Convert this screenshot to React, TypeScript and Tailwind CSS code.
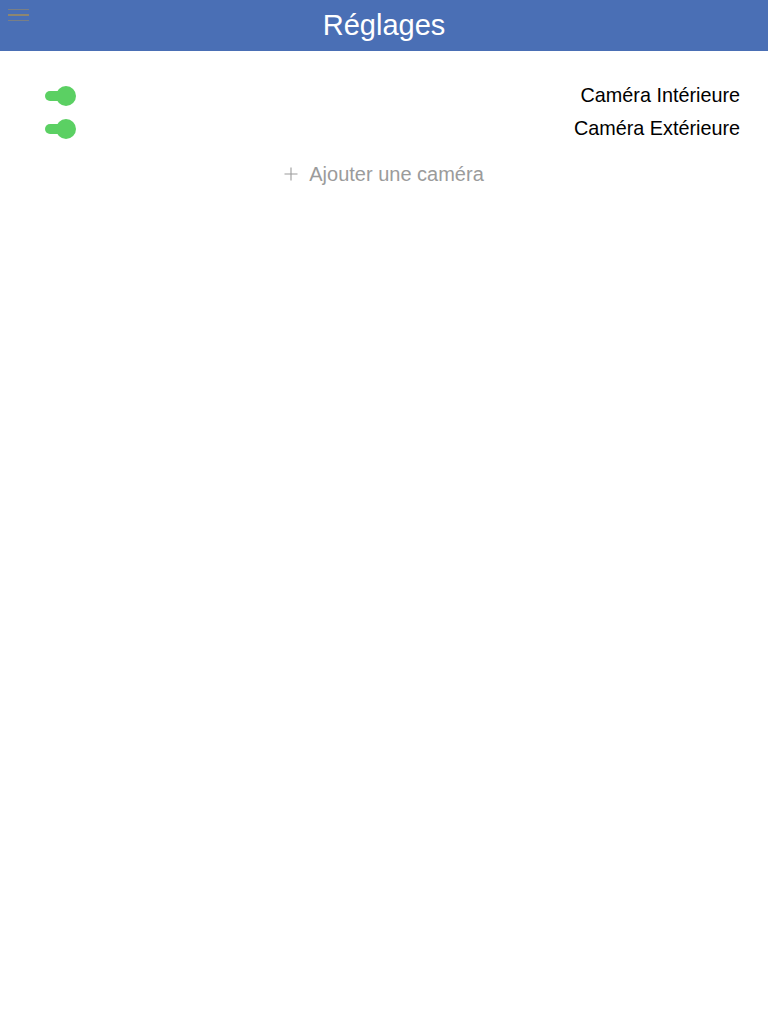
import React from "react";

function Toggle() {
  return (
    <div className="relative w-[31px] h-[20px] shrink-0">
      <div className="absolute left-0 top-[5px] w-[20px] h-[10px] rounded-full bg-[#5bd063]" />
      <div className="absolute right-0 top-0 w-[20px] h-[20px] rounded-full bg-[#5bd063]" />
    </div>
  );
}

export default function App() {
  const cams = ["Caméra Intérieure", "Caméra Extérieure"];
  return (
    <div
      className="w-[768px] h-[1024px] bg-white"
      style={{ fontFamily: '"Liberation Sans", Arial, sans-serif' }}
    >
      <header className="relative h-[51px] bg-[#4a6fb5] flex items-center justify-center">
        <div className="absolute left-[8px] top-[9px] w-[21px] flex flex-col gap-[4px]">
          <div className="h-px bg-[#8d8670] opacity-70" />
          <div className="h-[1.5px] bg-[#8d8670]" />
          <div className="h-px bg-[#8d8670] opacity-70" />
        </div>
        <h1 className="text-white text-[29px] leading-none">Réglages</h1>
      </header>
      <div className="pt-[28px] pl-[45px] pr-[28px]">
        {cams.map((c) => (
          <div key={c} className="h-[33px] flex items-center justify-between">
            <Toggle />
            <span className="text-[19.8px] text-black leading-none">{c}</span>
          </div>
        ))}
      </div>
      <div className="mt-[14px] h-[30px] flex items-center justify-center gap-[11px] text-[#9b9b9b]">
        <svg width="14" height="14" viewBox="0 0 14 14" className="shrink-0">
          <path d="M7 0.5V13.5M0.5 7H13.5" stroke="#9b9b9b" strokeWidth="1.1" />
        </svg>
        <span className="text-[20px] leading-none">Ajouter une caméra</span>
      </div>
    </div>
  );
}
